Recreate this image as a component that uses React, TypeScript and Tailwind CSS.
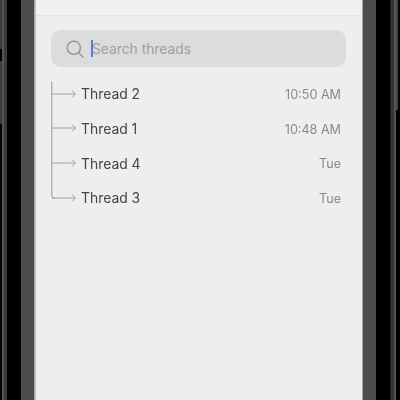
const threads = [
  { name: "Thread 2", time: "10:50 AM" },
  { name: "Thread 1", time: "10:48 AM" },
  { name: "Thread 4", time: "Tue" },
  { name: "Thread 3", time: "Tue" },
];

function LeftBezel() {
  return (
    <div className="flex h-full w-[36px] shrink-0">
      <div className="flex h-full w-[2px] flex-col">
        <div className="h-[49px] bg-[#3c3c3c]" />
        <div className="h-[12px] bg-black" />
        <div className="h-[63px] bg-[#3c3c3c]" />
        <div className="flex-1 bg-black" />
      </div>
      <div className="h-full w-[2px] bg-[#555555]" />
      <div className="h-full w-[3px] bg-[#3a3a3a]" />
      <div className="h-full w-[14px] bg-black" />
      <div className="h-full w-[13px] bg-[#4d4d4d]" />
      <div className="h-full w-[2px] bg-gradient-to-r from-[#8f8f8f] to-[#dddddd]" />
    </div>
  );
}

function RightBezel() {
  return (
    <div className="flex h-full w-[38px] shrink-0">
      <div className="h-full w-[1px] bg-[#a8a8a8]" />
      <div className="h-full w-[13px] bg-[#4d4d4d]" />
      <div className="h-full w-[14px] bg-black" />
      <div className="h-full w-[1px] bg-[#222222]" />
      <div className="h-full w-[3px] bg-[#333333]" />
      <div className="h-full w-[2px] bg-[#555555]" />
      <div className="flex h-full w-[2px] flex-col">
        <div className="h-[110px] bg-[#444444]" />
        <div className="flex-1 bg-black" />
      </div>
      <div className="h-full w-[2px] bg-black" />
    </div>
  );
}

function Tree() {
  const ys = [17, 51, 86, 121];
  return (
    <svg width="26" height="139" viewBox="0 0 26 139" fill="none" stroke="#a0a0a0" strokeWidth="1" className="shrink-0">
      <path d="M0.8 4.5V118Q0.8 121 4 121" strokeWidth="1.1" />
      {ys.map((y) => (
        <g key={y}>
          <path d={`M1 ${y}H24`} />
          <path d={`M21 ${y - 3.5}L24.5 ${y}L21 ${y + 3.5}`} />
        </g>
      ))}
    </svg>
  );
}

export default function App() {
  return (
    <div className="flex h-[400px] w-[400px] overflow-hidden bg-black font-['Inter',sans-serif]">
      <LeftBezel />
      <div className="flex h-full w-[326px] shrink-0 flex-col overflow-hidden bg-[#eeeeee]">
        <div className="h-[16px] shrink-0 border-b border-[#e2e2e2] bg-[#f0f0f0]" />
        <div className="blur-[0.35px]">
          <div className="mx-[15px] mt-[14px] flex h-[37px] w-[295px] shrink-0 items-center rounded-[10px] bg-[#dcdcdc] pl-[15px]">
            <svg width="18" height="18" viewBox="0 0 18 18" fill="none" stroke="#8e8e8e" strokeWidth="1.3" className="shrink-0">
              <circle cx="7.8" cy="7.8" r="6.6" />
              <path d="M12.6 12.6L17 17" strokeLinecap="round" />
            </svg>
            <div className="ml-[7px] h-[17px] w-[2px] shrink-0 bg-[#5b78e8]" />
            <span className="-ml-[1px] pt-[2px] text-[13.8px] leading-none text-[#a0a0a0]">Search threads</span>
          </div>
          <div className="ml-[15px] mt-[10px] flex w-[290px]">
            <Tree />
            <div className="ml-[4px] flex flex-1 flex-col">
              {threads.map((t) => (
                <div key={t.name} className="flex h-[34.7px] items-center justify-between pt-[2px]">
                  <span className="text-[13.9px] leading-none text-[#444444]">{t.name}</span>
                  <span className="text-[12.6px] leading-none text-[#8a8a8a]">{t.time}</span>
                </div>
              ))}
            </div>
          </div>
        </div>
      </div>
      <RightBezel />
    </div>
  );
}
